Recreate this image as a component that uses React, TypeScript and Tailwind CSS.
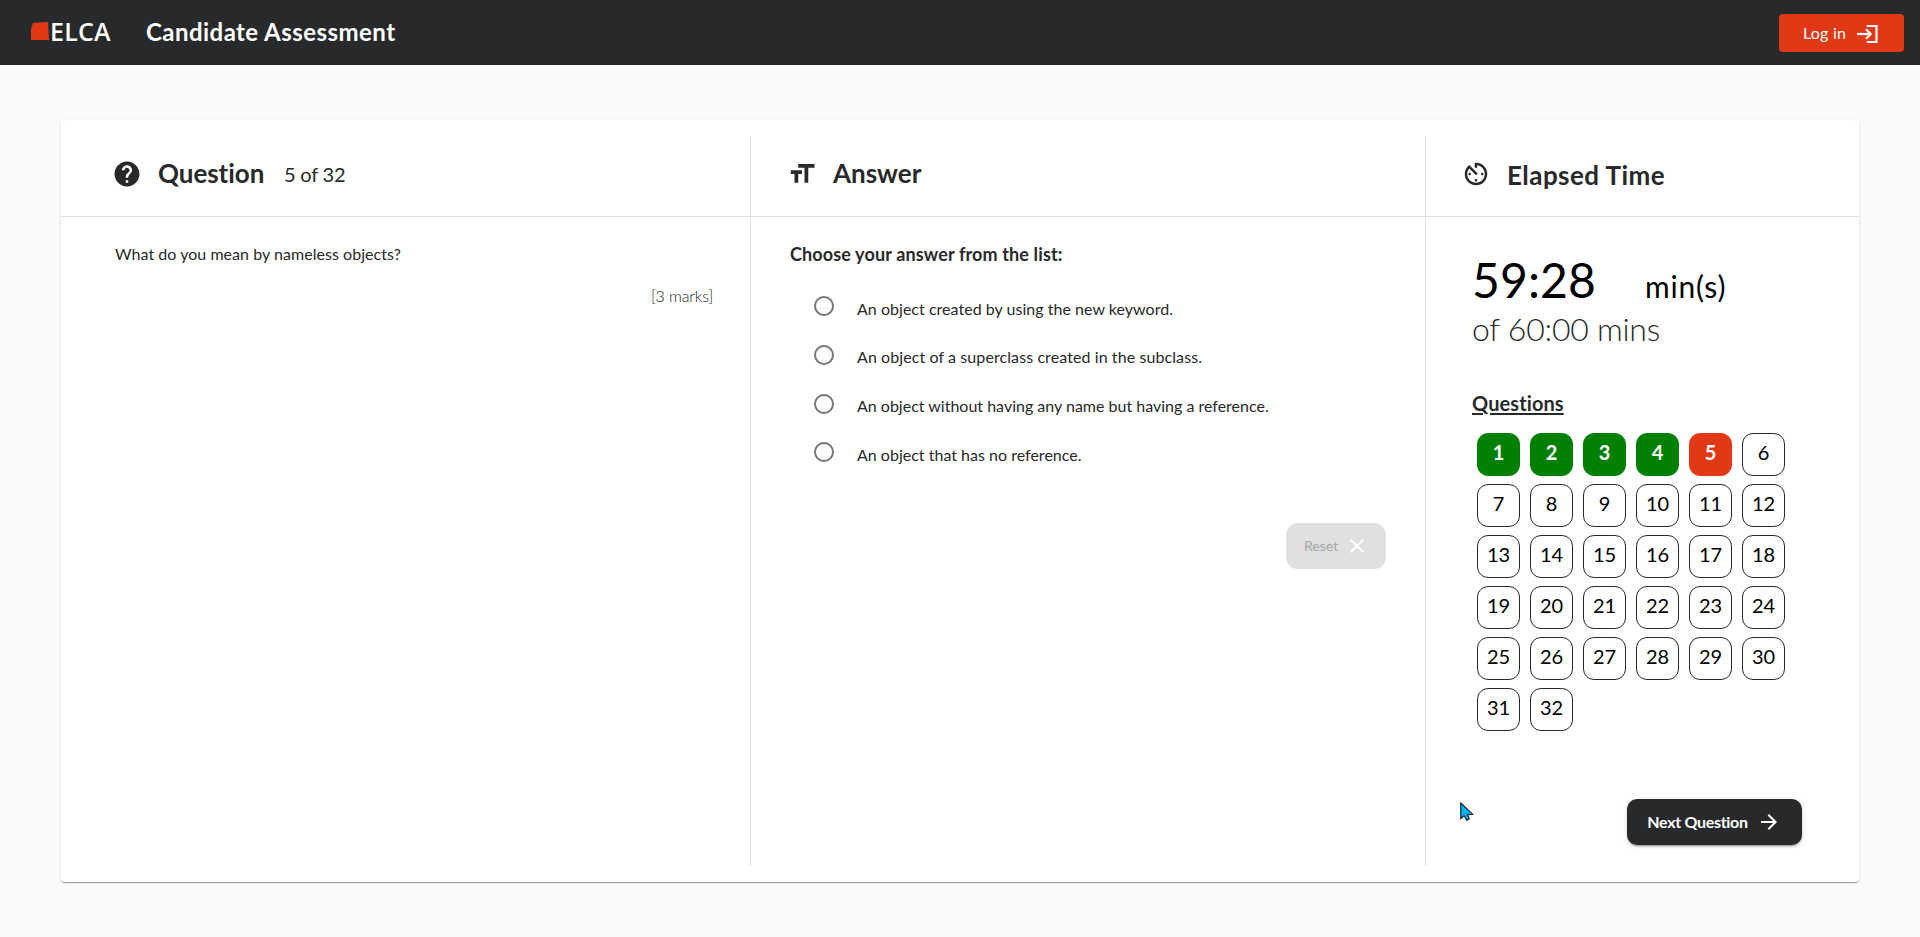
import React from "react";
import { MdArrowForward, MdAvTimer, MdClose, MdFormatSize, MdHelp } from "react-icons/md";

const options = [
  { text: "An object created by using the new keyword.", tracking: "tracking-[0.03px]" },
  { text: "An object of a superclass created in the subclass.", tracking: "tracking-[0.09px]" },
  { text: "An object without having any name but having a reference.", tracking: "tracking-[0px]" },
  { text: "An object that has no reference.", tracking: "tracking-[0.01px]" },
];

const TOTAL = 32;
const CURRENT = 5;

function LoginIcon() {
  return (
    <svg className="mt-0.5 size-6" viewBox="0 0 24 24" fill="none" stroke="currentColor" strokeWidth="2.2">
      <path d="M11.8 4H21.5V20H11.8" />
      <path d="M2 12H15.5" />
      <path d="M11 7.3L15.7 12L11 16.7" />
    </svg>
  );
}

function Header() {
  return (
    <header className="flex h-[65px] items-center bg-[#28292a] pr-4 pl-[31px] text-white">
      <svg className="-mt-[3px] h-[18px] w-[18px]" viewBox="0 0 18 18">
        <path d="M0 18V7L2 1L17 0L18 18Z" fill="#e13816" />
      </svg>
      <span className="-mt-1 ml-[1px] w-[61px] font-['Open_Sans',sans-serif] text-[25px] leading-8 font-semibold tracking-[0.2px]">
        ELCA
      </span>
      <h1 className="-mt-[1px] ml-[35px] text-2xl font-bold tracking-[0.45px]">Candidate Assessment</h1>
      <button className="mt-[1px] ml-auto flex h-[38px] w-[125px] items-center rounded bg-[#e13816] pl-6 text-base">
        <span className="mr-[9px] tracking-[0.2px]">Log in</span>
        <LoginIcon />
      </button>
    </header>
  );
}

function QuestionColumn() {
  return (
    <section className="my-4 w-[689px]">
      <div className="flex h-[81px] items-start border-b border-black/12 pl-[51px]">
        <MdHelp className="mt-[23px] size-[30px]" />
        <div className="mt-[22px] ml-4 flex items-start">
          <h2 className="w-[106px] text-[26px] leading-[30px] font-bold tracking-[-0.05px]">Question</h2>
          <span className="mt-[1px] ml-[20px] text-xl leading-[30px] tracking-[-0.2px]">5 of 32</span>
        </div>
      </div>
      <div className="pt-[25px] pr-[37px] pl-[54px]">
        <p className="text-base leading-6 tracking-[0.04px]">What do you mean by nameless objects?</p>
        <p className="mt-[18px] text-right text-base leading-6 font-light tracking-[-0.15px]">[3 marks]</p>
      </div>
    </section>
  );
}

function AnswerColumn() {
  return (
    <section className="my-4 w-[675px] border-l border-black/12">
      <div className="flex h-[81px] items-start border-b border-black/12 pl-9">
        <MdFormatSize className="mt-[23px] size-[30px]" />
        <h2 className="mt-[22px] ml-4 text-[26px] leading-[30px] font-bold">Answer</h2>
      </div>
      <div className="pt-[25px] pr-[39px] pl-[39px]">
        <p className="text-lg leading-6 font-bold tracking-[0.13px]">Choose your answer from the list:</p>
        <ul className="mt-[28px] pl-[24px]">
          {options.map((o) => (
            <li key={o.text} className="flex h-[48.67px] items-start">
              <span className="mt-[2.3px] size-5 rounded-full border-2 border-[#757575]" />
              <span className={`mt-[2.8px] ml-[23px] text-base leading-6 ${o.tracking}`}>{o.text}</span>
            </li>
          ))}
        </ul>
        <div className="mt-[34px] flex justify-end">
          <button className="flex h-[46px] w-[100px] items-center rounded-xl bg-[#e0e0e0] pl-[18px] text-sm text-[#a6a6a6]">
            <span className="mr-[6.5px] tracking-[0.05px]">Reset</span>
            <MdClose className="size-6 text-white" />
          </button>
        </div>
      </div>
    </section>
  );
}

function cellStyle(n: number) {
  if (n < CURRENT) return "border border-[#008000] bg-[#008000] font-bold text-white";
  if (n === CURRENT) return "border border-[#e13816] bg-[#e13816] font-bold text-white";
  return "border border-[#28292a] text-black";
}

function TimeColumn() {
  return (
    <section className="my-4 w-[434px] border-l border-black/12">
      <div className="flex h-[81px] items-start border-b border-black/12 pl-[35px]">
        <MdAvTimer className="mt-[23px] size-[30px]" />
        <h2 className="mt-[24px] ml-4 text-[26px] leading-[30px] font-bold tracking-[0.45px]">Elapsed Time</h2>
      </div>
      <div className="pt-[35px] pl-[46px]">
        <div className="flex items-start text-black">
          <span className="w-[122px] text-5xl leading-[56px] tracking-[0.1px]">59:28</span>
          <span className="mt-[14px] ml-[51px] text-3xl leading-10 tracking-[0.8px]">min(s)</span>
        </div>
        <p className="mt-[1px] text-[32px] leading-10 font-light tracking-[-0.25px]">of 60:00 mins</p>
        <h3 className="mt-[40px] text-xl leading-7 font-bold tracking-[0.1px] underline decoration-2 underline-offset-2">
          Questions
        </h3>
        <div className="mt-[16px] ml-[5px] grid grid-cols-[repeat(6,43px)] gap-x-[10px] gap-y-2">
          {Array.from({ length: TOTAL }, (_, i) => i + 1).map((n) => (
            <button
              key={n}
              className={`flex h-[43px] items-center justify-center rounded-[11px] pb-[5px] text-xl ${cellStyle(n)}`}
            >
              {n}
            </button>
          ))}
        </div>
        <div className="mt-[68px] mr-[57px] flex justify-end">
          <button className="flex h-[46px] w-[175px] items-center rounded-[10px] bg-[#28292a] pl-5 text-base font-bold text-white shadow-[0_3px_1px_-2px_rgba(0,0,0,0.2),0_2px_2px_0_rgba(0,0,0,0.14),0_1px_5px_0_rgba(0,0,0,0.12)]">
            <span className="w-[101px] tracking-[-0.3px] whitespace-nowrap">Next Question</span>
            <MdArrowForward className="ml-[9px] size-6" />
          </button>
        </div>
      </div>
    </section>
  );
}

export default function App() {
  return (
    <div className="relative h-[937px] w-[1920px] overflow-hidden bg-[#fafafa] font-[Lato,sans-serif] text-[#28292a] [font-variant-ligatures:none]">
      <Header />
      <main className="mt-[55px] ml-[61px] flex h-[762px] w-[1798px] rounded bg-white shadow-[0_2px_1px_-1px_rgba(0,0,0,0.2),0_1px_1px_0_rgba(0,0,0,0.14),0_1px_3px_0_rgba(0,0,0,0.12)]">
        <QuestionColumn />
        <AnswerColumn />
        <TimeColumn />
      </main>
      <svg className="absolute top-[802px] left-[1460px] h-[20px] w-[15px]" viewBox="0 0 15 20">
        <path
          d="M0.8 1V16.5L4.2 13.6L6.6 18.2L9.2 17L7.4 12.6L12.6 12.2Z"
          fill="#00b7ff"
          stroke="#111"
          strokeWidth="1.1"
        />
      </svg>
    </div>
  );
}
